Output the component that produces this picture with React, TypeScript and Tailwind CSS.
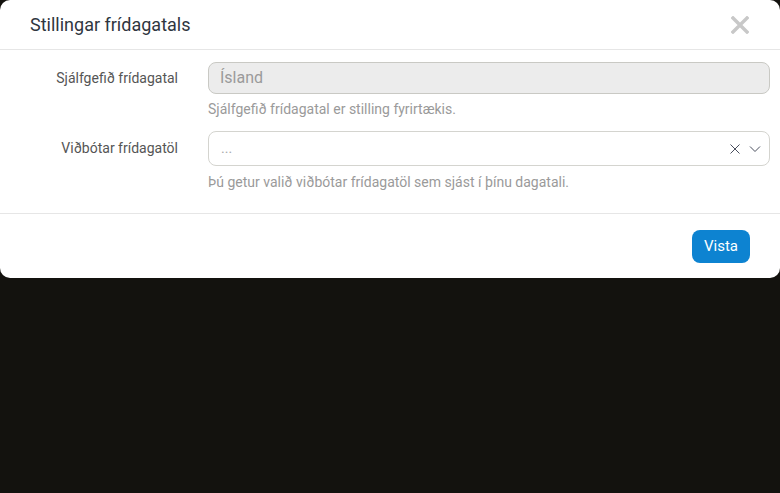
import React from "react";

const font = { fontFamily: "Roboto, 'Liberation Sans', sans-serif" };

export default function App() {
  return (
    <div className="w-[780px] h-[493px] bg-[#13120e] overflow-hidden" style={font}>
      <div className="w-full bg-white rounded-[10px]">
        <div className="h-[50px] flex items-center justify-between pl-[30px] pr-[30px] border-b border-[#e6e6e6]">
          <h1 className="text-[18px] text-[#2f3640] leading-none">Stillingar frídagatals</h1>
          <svg width="18" height="18" viewBox="0 0 18 18" className="mr-[1px]">
            <path d="M2 2 L16 16 M16 2 L2 16" stroke="#c8c8c8" strokeWidth="3.4" strokeLinecap="square" />
          </svg>
        </div>
        <div className="pt-[12px] pb-[21px] pr-[10px] border-b border-[#e6e6e6]">
          <div className="flex">
            <div className="w-[208px] pr-[30px] text-right text-[14px] text-[#555] h-[32px] flex items-center justify-end">
              Sjálfgefið frídagatal
            </div>
            <div className="flex-1">
              <div className="h-[32px] rounded-[8px] border border-[#c9c9c4] bg-[#ececec] flex items-center px-[11px] text-[16px] text-[#9a9a9a]">
                Ísland
              </div>
              <div className="mt-[5px] text-[14px] leading-[20px] text-[#9a9a9a]">
                Sjálfgefið frídagatal er stilling fyrirtækis.
              </div>
            </div>
          </div>
          <div className="flex mt-[12px]">
            <div className="w-[208px] pr-[30px] text-right text-[14px] text-[#555] h-[35px] flex items-center justify-end">
              Viðbótar frídagatöl
            </div>
            <div className="flex-1">
              <div className="h-[35px] rounded-[8px] border border-[#d4d4cf] bg-white flex items-center pl-[12px] pr-[8px] text-[14px] text-[#aaa]">
                <span className="flex-1">...</span>
                <svg width="12" height="12" viewBox="0 0 12 12" className="mr-[8px]">
                  <path d="M1.5 1.5 L10.5 10.5 M10.5 1.5 L1.5 10.5" stroke="#4a4f5e" strokeWidth="1" />
                </svg>
                <svg width="12" height="8" viewBox="0 0 12 8">
                  <path d="M1 1.5 L6 6.5 L11 1.5" stroke="#4a4f5e" strokeWidth="1" fill="none" />
                </svg>
              </div>
              <div className="mt-[6px] text-[14px] leading-[20px] text-[#9a9a9a]">
                Þú getur valið viðbótar frídagatöl sem sjást í þínu dagatali.
              </div>
            </div>
          </div>
        </div>
        <div className="flex justify-end pt-[16px] pb-[15px] pr-[30px]">
          <button className="h-[33px] px-[12px] rounded-[8px] bg-[#0d83d1] text-white text-[15px]">Vista</button>
        </div>
      </div>
    </div>
  );
}
